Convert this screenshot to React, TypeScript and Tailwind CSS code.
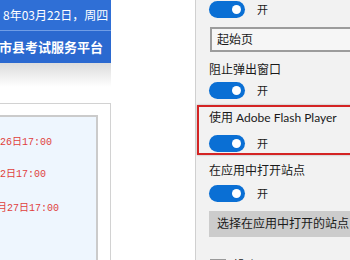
import React from "react";

function Toggle() {
  return (
    <div className="flex items-center h-[18px]">
      <div className="w-[36px] h-[17px] rounded-full bg-[#0a6fd4] flex items-center justify-end pr-[4px]">
        <div className="w-[9px] h-[9px] rounded-full bg-white" />
      </div>
      <span className="ml-[12px] text-[11px] text-[#1a1a1a] leading-none">开</span>
    </div>
  );
}

export default function App() {
  const font = { fontFamily: "'Lato', 'Noto Sans CJK SC', sans-serif" };
  return (
    <div className="w-[350px] h-[260px] overflow-hidden bg-white flex" style={font}>
      {/* left web page */}
      <div className="w-[111px] shrink-0 flex flex-col overflow-hidden">
        <div className="h-[30px] bg-[#2f6fd6] text-white text-[12px] leading-[30px] pl-[3px] whitespace-nowrap" style={{ fontFamily: "'Noto Sans CJK SC', sans-serif" }}>
          8年03月22日，周四
        </div>
        <div className="h-[1px] bg-[#709de6]" />
        <div className="h-[32px] bg-[#2b69d0] text-white font-bold text-[13px] leading-[32px] whitespace-nowrap -ml-[1px]" style={{ fontFamily: "'Noto Sans CJK SC', sans-serif" }}>
          市县考试服务平台
        </div>
        <div className="h-[24px] bg-gradient-to-b from-[#dcdcdc] to-white" />
        <div className="h-[16px]" />
        <div className="flex-1 border-t border-r border-[#d2d2d2] pt-[11px] pr-[12px]">
          <div className="h-full border-t-2 border-r-2 border-[#cbcbcb] bg-[#eef6fe] text-[#e0403c] text-[10px] whitespace-nowrap" style={{ fontFamily: "'Liberation Mono', 'Noto Sans CJK SC', monospace" }}>
            <div className="mt-[20px] leading-[12px]">26日17:00</div>
            <div className="mt-[20px] leading-[12px]">2日17:00</div>
            <div className="mt-[22px] leading-[12px] -ml-[3px]">月27日17:00</div>
          </div>
        </div>
      </div>
      <div className="w-[84px] shrink-0" />
      {/* settings panel */}
      <div className="w-[155px] shrink-0 border-l border-[#d0d0d0] bg-[#f2f2f2] pl-[1px] flex flex-col items-start overflow-hidden whitespace-nowrap text-[12px] text-[#1a1a1a]">
        <div className="pl-[12px]">
          <Toggle />
        </div>
        <div className="ml-[13px] mt-[9px] w-[160px] shrink-0 h-[25px] border-2 border-[#9c9c9c] bg-[#f6f6f6] flex items-center pl-[5px]">
          起始页
        </div>
        <div className="pl-[12px] mt-[9px] h-[18px] leading-[18px]">阻止弹出窗口</div>
        <div className="pl-[12px] mt-[2px]">
          <Toggle />
        </div>
        <div className="mt-[6px] w-[170px] shrink-0 h-[50px] border-2 border-[#d42424] pl-[10px] pt-[2px] shadow-[0_0_2px_rgba(0,0,0,0.3)]">
          <div className="h-[18px] leading-[18px]">使用 Adobe Flash Player</div>
          <div className="mt-[7px]">
            <Toggle />
          </div>
        </div>
        <div className="pl-[12px] mt-[7px] h-[18px] leading-[18px]">在应用中打开站点</div>
        <div className="pl-[12px] mt-[4px]">
          <Toggle />
        </div>
        <div className="ml-[12px] mt-[9px] w-[160px] shrink-0 h-[26px] bg-[#cccccc] flex items-center pl-[8px]">
          选择在应用中打开的站点
        </div>
        <div className="pl-[13px] mt-[20px] flex items-start h-[20px] shrink-0">
          <div className="w-[16px] h-[2px] bg-[#9a9a9a] mt-[2px]" />
          <span className="ml-[6px] leading-[18px]">帮助</span>
        </div>
      </div>
    </div>
  );
}
